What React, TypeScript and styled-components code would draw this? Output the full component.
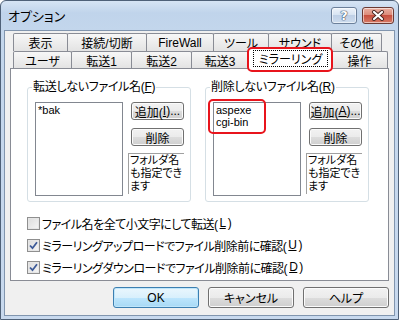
import React from 'react';
import styled, { createGlobalStyle } from 'styled-components';

const GlobalStyle = createGlobalStyle`
  html, body {
    margin: 0;
    padding: 0;
    background: #ffffff;
  }
  body {
    font-family: "Liberation Sans", "Noto Sans CJK JP", sans-serif;
    font-size: 12px;
    color: #000;
    font-feature-settings: "palt";
  }
`;

const Window = styled.div`
  position: relative;
  width: 399px;
  height: 320px;
  box-sizing: border-box;
  border: 1px solid #4f6178;
  border-radius: 6px 6px 0 0;
  background: linear-gradient(to bottom, #d6e4f4 0px, #c0d4eb 12px, #c3d6ec 29px, #c8d9ee 100%);
  padding: 0 3px 3px;
  display: flex;
  flex-direction: column;
`;

const TitleBar = styled.div`
  height: 29px;
  flex: none;
  display: flex;
  align-items: center;
  padding: 0 1px 0 4px;
`;

const Title = styled.div`
  flex: 1;
  font-size: 13px;
`;

const CaptionButton = styled.div<{ $close?: boolean }>`
  width: ${p => (p.$close ? 32 : 26)}px;
  height: 17px;
  margin-left: ${p => (p.$close ? 5 : 0)}px;
  box-sizing: border-box;
  border: 1px solid ${p => (p.$close ? '#6b3a33' : '#6b7f9a')};
  border-radius: 3px;
  display: flex;
  align-items: center;
  justify-content: center;
  box-shadow: inset 0 0 0 1px rgba(255, 255, 255, 0.55);
  background: ${p =>
    p.$close
      ? 'linear-gradient(to bottom, #eab0a2 0%, #dc8c7b 45%, #c8503f 50%, #d67a66 100%)'
      : 'linear-gradient(to bottom, #eef3fa 0%, #d8e4f2 45%, #bfd0e6 50%, #cddcee 100%)'};
`;

const HelpGlyph = styled.span`
  font-family: "DejaVu Sans", sans-serif;
  font-weight: bold;
  font-size: 13px;
  line-height: 13px;
  color: #fff;
  text-shadow: 0 0 1px #2c3e57, 0 0 1px #2c3e57, 0 0 1px #2c3e57;
`;

const Client = styled.div`
  flex: 1;
  background: #f0f0f0;
  border: 1px solid #8195ae;
  padding: 2px 5px 0 5px;
  display: flex;
  flex-direction: column;
`;

const TabRow = styled.div<{ $h: number }>`
  display: flex;
  align-items: flex-end;
  height: ${p => p.$h}px;
  margin-left: 3px;
`;

const Tab = styled.div<{ $w: number; $active?: boolean }>`
  position: ${p => (p.$active ? 'relative' : 'static')};
  width: ${p => p.$w}px;
  height: ${p => (p.$active ? '21px' : '100%')};
  margin-right: -1px;
  margin-bottom: ${p => (p.$active ? -1 : 0)}px;
  box-sizing: border-box;
  border: 1px solid #898c95;
  border-bottom: none;
  border-radius: 2px 2px 0 0;
  background: ${p => (p.$active ? '#ffffff' : 'linear-gradient(to bottom, #f7f7f7, #e3e3e3)')};
  display: flex;
  align-items: center;
  justify-content: center;
  padding: ${p => (p.$active ? '1px 3px 2px 4px' : '0')};
  white-space: nowrap;
`;

const FocusText = styled.span`
  flex: 1;
  align-self: stretch;
  display: flex;
  align-items: center;
  justify-content: center;
  border: 1px dotted #000;
`;

const Mark = styled.div`
  position: absolute;
  border: 2px solid #e8141c;
  border-radius: 5px;
  pointer-events: none;
`;

const TabMark = styled(Mark)`
  left: -2px;
  top: -2px;
  right: -2px;
  bottom: -3px;
`;

const ListMark = styled(Mark)`
  left: -6px;
  top: -4px;
  width: 54px;
  height: 31px;
`;

const Panel = styled.div`
  height: 213px;
  box-sizing: border-box;
  border: 1px solid #898c95;
  background: #ffffff;
  padding: 0 0 0 16px;
  display: flex;
  flex-direction: column;
`;

const GroupRow = styled.div`
  display: flex;
  gap: 14px;
  margin-top: 18px;
`;

const Group = styled.div`
  width: 164px;
  height: 115px;
  box-sizing: border-box;
  border: 1px solid #d5dfe5;
  border-radius: 3px;
  padding: 0 0 0 7px;
`;

const Legend = styled.div`
  width: fit-content;
  margin: -8px 0 0 -3px;
  padding: 0 1px;
  height: 14px;
  line-height: 14px;
  background: #ffffff;
  letter-spacing: -0.3px;
  white-space: nowrap;
`;

const GroupBody = styled.div`
  display: flex;
  margin-top: 8px;
`;

const ListBox = styled.div`
  position: relative;
  width: 88px;
  height: 94px;
  box-sizing: border-box;
  border: 1px solid #828790;
  background: #fff;
  padding: 1px 2px;
  font-size: 11px;
  line-height: 12px;
`;

const Side = styled.div`
  width: 56px;
  margin-left: 5px;
  display: flex;
  flex-direction: column;
`;

const PushButton = styled.div<{ $default?: boolean; $w?: number; $h?: number }>`
  width: ${p => p.$w ?? 53}px;
  height: ${p => p.$h ?? 18}px;
  box-sizing: border-box;
  border: 1px solid ${p => (p.$default ? '#3c7fb1' : '#707070')};
  border-radius: 3px;
  background: ${p =>
    p.$default
      ? 'linear-gradient(to bottom, #eaf6fd 0%, #d9f0fc 50%, #bee6fd 50%, #a7d9f5 100%)'
      : 'linear-gradient(to bottom, #f2f2f2 0%, #ebebeb 50%, #dddddd 50%, #cfcfcf 100%)'};
  box-shadow: inset 0 0 0 1px ${p => (p.$default ? '#bfe6fb' : '#fbfbfb')};
  display: flex;
  align-items: center;
  justify-content: center;
  white-space: nowrap;
`;

const SmallButton = styled(PushButton)<{ $gap?: number }>`
  margin-left: 3px;
  margin-top: ${p => p.$gap ?? 0}px;
`;

const Hint = styled.div`
  margin-top: 7px;
  height: 41px;
  box-sizing: border-box;
  border-left: 1px solid #a0a0a0;
  border-top: 1px solid #a0a0a0;
  padding-left: 1px;
  font-size: 11px;
  line-height: 13px;
  white-space: nowrap;
`;

const CheckList = styled.div`
  margin-top: 10px;
  display: flex;
  flex-direction: column;
`;

const CheckRow = styled.div`
  height: 22px;
  display: flex;
  align-items: center;
  gap: 2px;
  letter-spacing: -0.5px;
  white-space: nowrap;
`;

const Box = styled.div`
  width: 13px;
  height: 13px;
  box-sizing: border-box;
  border: 1px solid #8f8f8f;
  background: linear-gradient(to bottom right, #dcdcdc, #f6f6f6);
  box-shadow: inset 0 0 0 1px #e6e6e6;
  display: flex;
  align-items: center;
  justify-content: center;
`;

const ButtonRow = styled.div`
  display: flex;
  justify-content: flex-end;
  gap: 9px;
  margin-top: 6px;
`;

const row1: [string, number][] = [
  ['表示', 55],
  ['接続/切断', 80],
  ['FireWall', 68],
  ['ツール', 56],
  ['サウンド', 64],
  ['その他', 51],
];

const row2: [string, number][] = [
  ['ユーザ', 59],
  ['転送1', 61],
  ['転送2', 61],
  ['転送3', 58],
  ['ミラーリング', 84],
  ['操作', 57],
];

const Check = ({ on }: { on?: boolean }) => (
  <Box>
    {on && (
      <svg width="9" height="9" viewBox="0 0 9 9">
        <path d="M1 4.5 L3.5 7.2 L8 1.2" fill="none" stroke="#3d5a98" strokeWidth="1.8" />
      </svg>
    )}
  </Box>
);

const FileGroup = ({ title, keyChar, items, addKey, mark }: {
  title: string; keyChar: string; items: string[]; addKey: string; mark?: boolean;
}) => (
  <Group>
    <Legend>{title}(<u>{keyChar}</u>)</Legend>
    <GroupBody>
      <ListBox>
        {items.map(t => <div key={t}>{t}</div>)}
        {mark && <ListMark />}
      </ListBox>
      <Side>
        <SmallButton>追加(<u>{addKey}</u>)...</SmallButton>
        <SmallButton $gap={8}>削除</SmallButton>
        <Hint>フォルダ名<br />も指定でき<br />ます</Hint>
      </Side>
    </GroupBody>
  </Group>
);

export default function App() {
  return (
    <>
      <GlobalStyle />
      <Window>
        <TitleBar>
          <Title>オプション</Title>
          <CaptionButton><HelpGlyph>?</HelpGlyph></CaptionButton>
          <CaptionButton $close>
            <svg width="14" height="11" viewBox="0 0 14 11">
              <path d="M3 2 L11 9 M11 2 L3 9" stroke="#4a2520" strokeWidth="4" strokeLinecap="round" />
              <path d="M3 2 L11 9 M11 2 L3 9" stroke="#ffffff" strokeWidth="2.2" strokeLinecap="round" />
            </svg>
          </CaptionButton>
        </TitleBar>
        <Client>
          <TabRow $h={18}>
            {row1.map(([t, w]) => <Tab key={t} $w={w}>{t}</Tab>)}
          </TabRow>
          <TabRow $h={17}>
            {row2.map(([t, w]) =>
              t === 'ミラーリング' ? (
                <Tab key={t} $w={w} $active>
                  <FocusText>{t}</FocusText>
                  <TabMark />
                </Tab>
              ) : (
                <Tab key={t} $w={w}>{t}</Tab>
              )
            )}
          </TabRow>
          <Panel>
            <GroupRow>
              <FileGroup title="転送しないファイル名" keyChar="F" items={['*bak']} addKey="I" />
              <FileGroup title="削除しないファイル名" keyChar="R" items={['aspexe', 'cgi-bin']} addKey="A" mark />
            </GroupRow>
            <CheckList>
              <CheckRow><Check />ファイル名を全て小文字にして転送(<u>L</u>)</CheckRow>
              <CheckRow><Check on />ミラーリングアップロードでファイル削除前に確認(<u>U</u>)</CheckRow>
              <CheckRow><Check on />ミラーリングダウンロードでファイル削除前に確認(<u>D</u>)</CheckRow>
            </CheckList>
          </Panel>
          <ButtonRow>
            <PushButton $default $w={86} $h={21}>OK</PushButton>
            <PushButton $w={86} $h={21}>キャンセル</PushButton>
            <PushButton $w={86} $h={21}>ヘルプ</PushButton>
          </ButtonRow>
        </Client>
      </Window>
    </>
  );
}
